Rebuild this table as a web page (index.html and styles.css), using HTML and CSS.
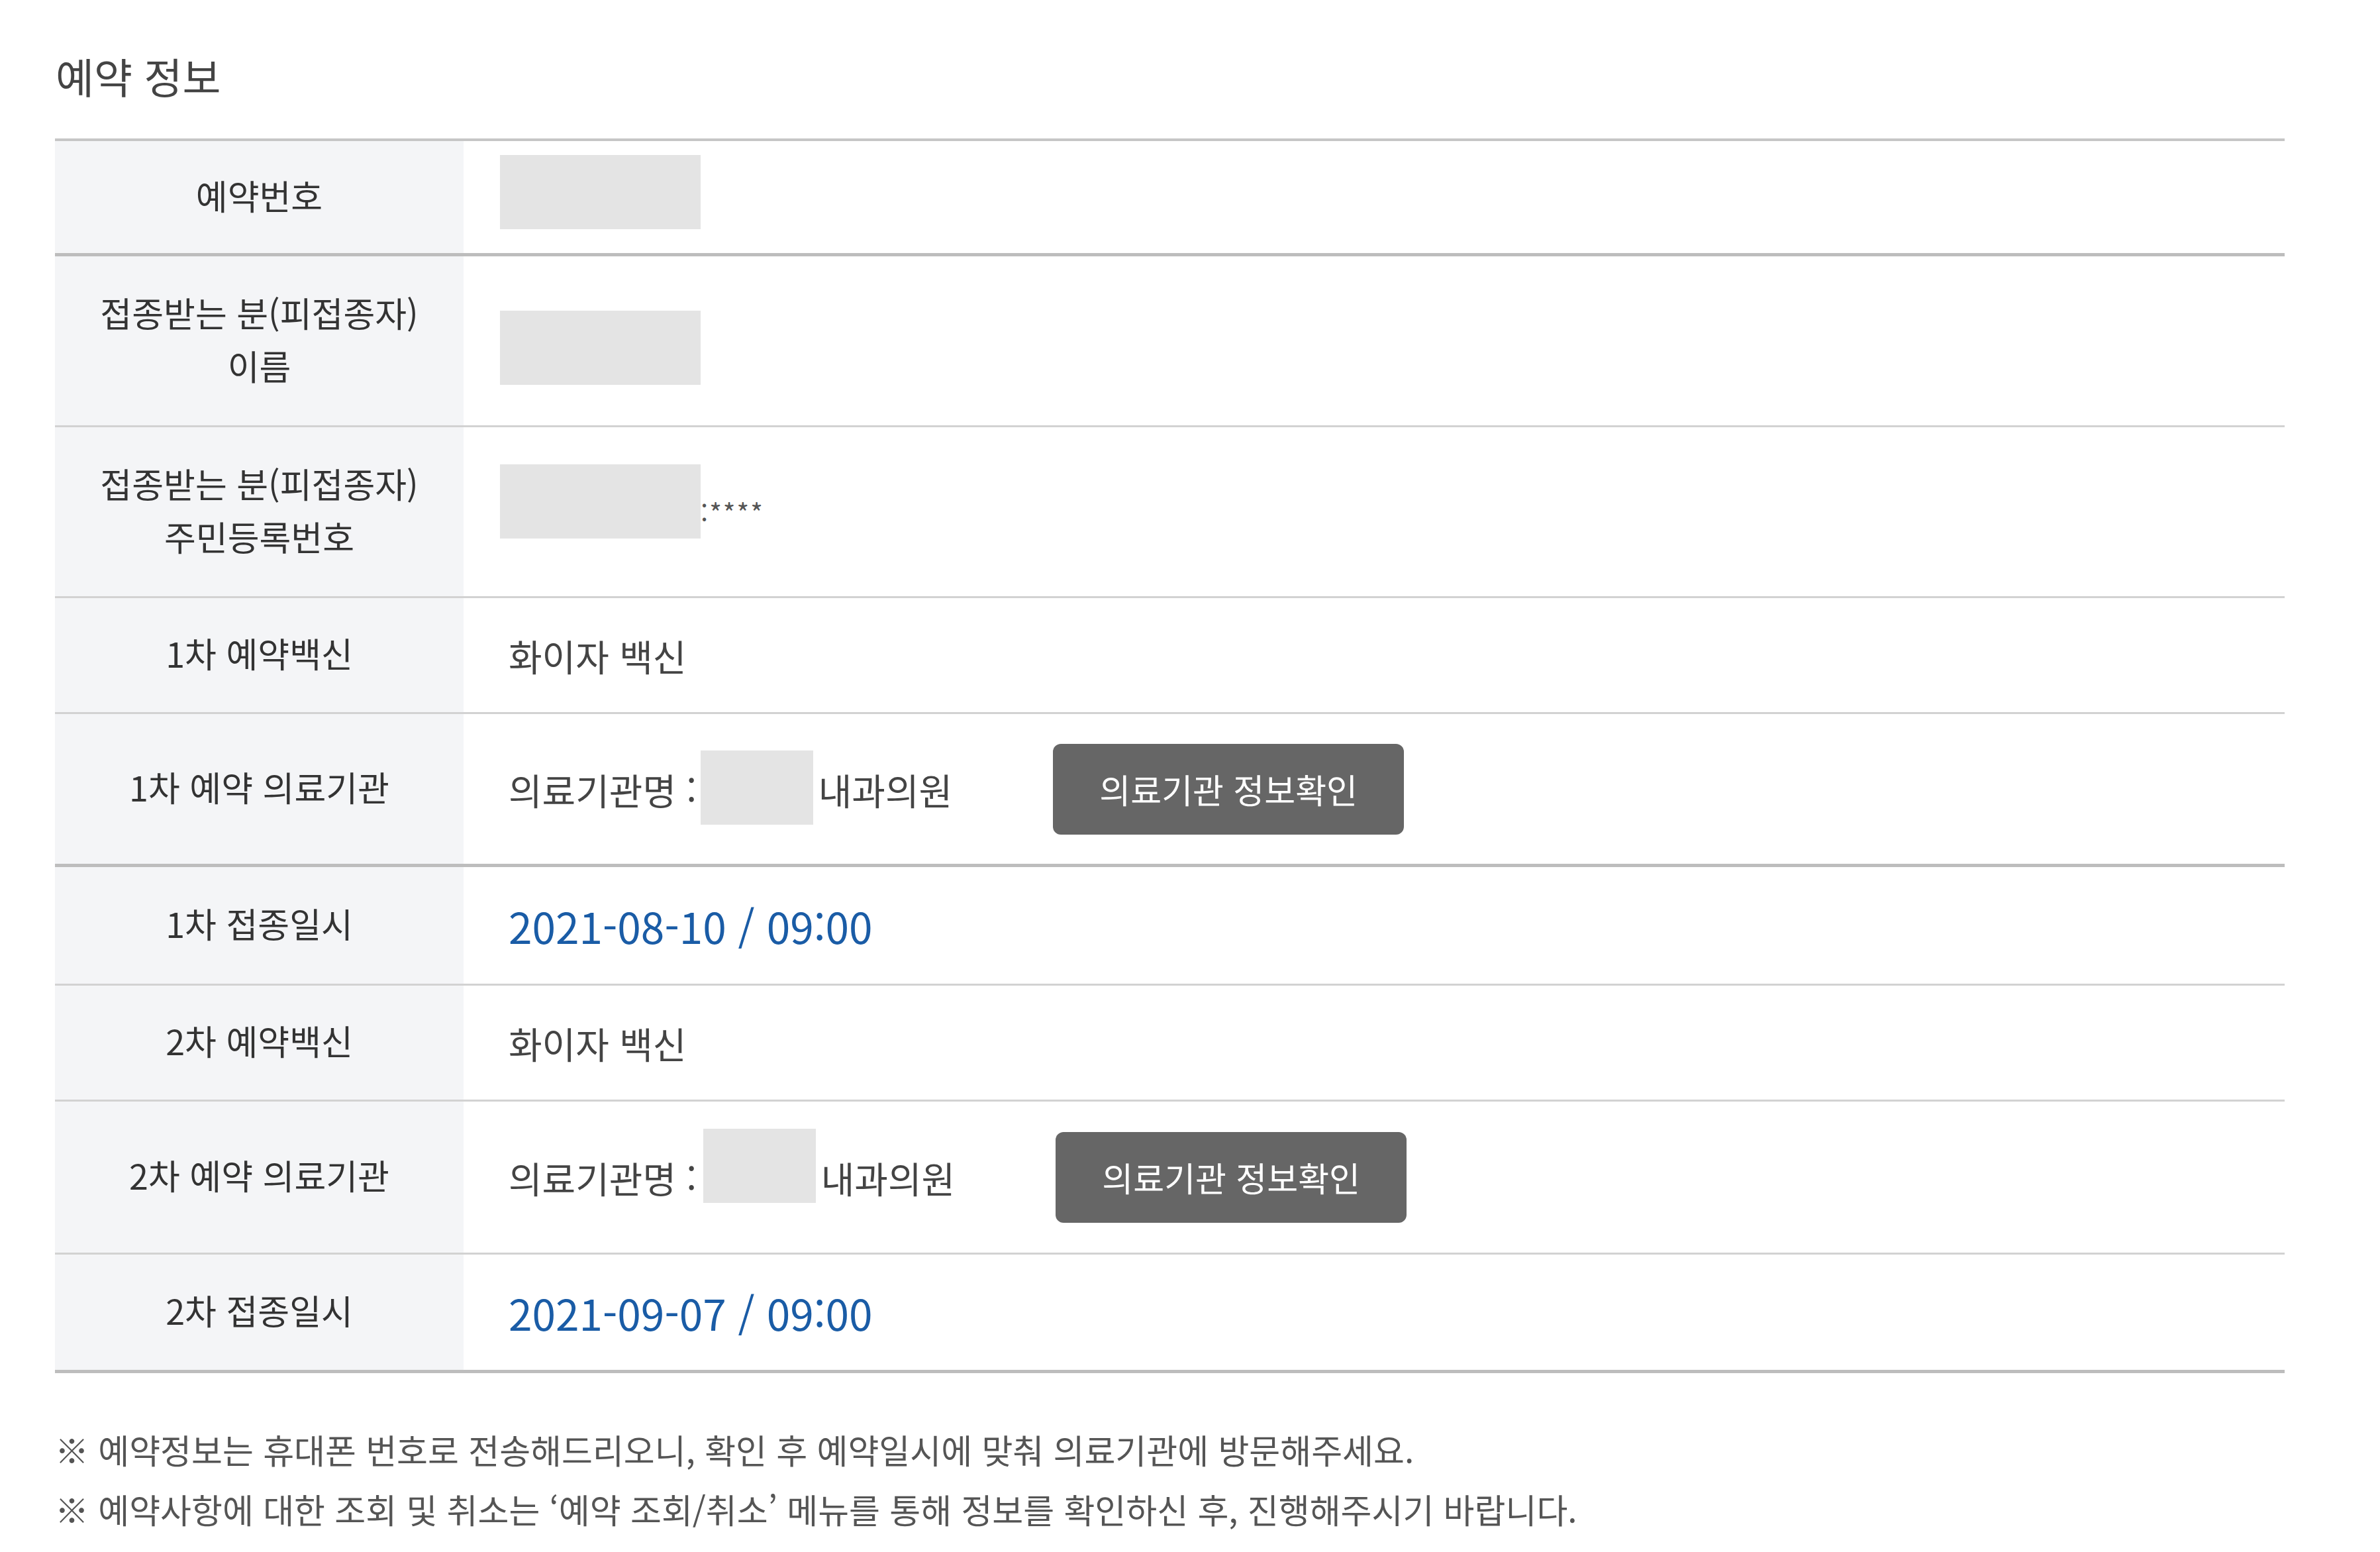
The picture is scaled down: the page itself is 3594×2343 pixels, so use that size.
FILE: index.html
```html
<!DOCTYPE html>
<html lang="ko">
<head>
<meta charset="utf-8">
<title>예약 정보</title>
<link rel="stylesheet" href="styles.css">
</head>
<body>
<div class="page">
  <h2 class="title">예약 정보</h2>
  <div class="info">
    <div class="row r-short thick">
      <div class="label">예약번호</div>
      <div class="value"><span class="mask mask-lg"></span></div>
    </div>
    <div class="row r-tall">
      <div class="label">접종받는 분(피접종자)<br>이름</div>
      <div class="value"><span class="mask mask-lg mask-low"></span></div>
    </div>
    <div class="row r-tall">
      <div class="label">접종받는 분(피접종자)<br>주민등록번호</div>
      <div class="value"><span class="mask mask-lg mask-high"></span><span class="stars">:****</span></div>
    </div>
    <div class="row r-short">
      <div class="label">1차 예약백신</div>
      <div class="value"><span class="text">화이자 백신</span></div>
    </div>
    <div class="row r-btn thick">
      <div class="label">1차 예약 의료기관</div>
      <div class="value">
        <span class="text">의료기관명 :</span><span class="mask mask-sm"></span><span class="text">내과의원</span>
        <button class="btn" type="button">의료기관 정보확인</button>
      </div>
    </div>
    <div class="row r-date">
      <div class="label">1차 접종일시</div>
      <div class="value"><span class="date">2021-08-10 / 09:00</span></div>
    </div>
    <div class="row r-short">
      <div class="label">2차 예약백신</div>
      <div class="value"><span class="text">화이자 백신</span></div>
    </div>
    <div class="row r-btn">
      <div class="label">2차 예약 의료기관</div>
      <div class="value">
        <span class="text">의료기관명 :</span><span class="mask mask-sm mask-high2"></span><span class="text">내과의원</span>
        <button class="btn" type="button">의료기관 정보확인</button>
      </div>
    </div>
    <div class="row r-date thick">
      <div class="label">2차 접종일시</div>
      <div class="value"><span class="date">2021-09-07 / 09:00</span></div>
    </div>
  </div>
  <ul class="notes">
    <li>※ 예약정보는 휴대폰 번호로 전송해드리오니, 확인 후 예약일시에 맞춰 의료기관에 방문해주세요.</li>
    <li>※ 예약사항에 대한 조회 및 취소는 ‘예약 조회/취소’ 메뉴를 통해 정보를 확인하신 후, 진행해주시기 바랍니다.</li>
  </ul>
</div>
</body>
</html>
```

FILE: styles.css
```css
* {
  box-sizing: border-box;
}

html, body {
  margin: 0;
  padding: 0;
  background: #ffffff;
}

body {
  font-family: "Noto Sans CJK KR", "Noto Sans", sans-serif;
  color: #333333;
}

.page {
  padding: 74px 144px 40px 83px;
  width: 3594px;
}

.title {
  margin: 0 0 55px 0;
  height: 80px;
  line-height: 80px;
  font-size: 63px;
  font-weight: 400;
  color: #444444;
  padding-left: 1px;
}

.info {
  border-top: 4px solid #c6c6c6;
  width: 3367px;
}

.row {
  display: flex;
  border-bottom: 3px solid #d2d2d2;
}

.row.thick {
  border-bottom: 5px solid #bdbdbd;
}

.r-short { height: 175px; }
.r-tall { height: 258px; }
.r-btn { height: 231px; }
.r-date { height: 179px; }

.row:first-child { height: 174px; }

.label {
  width: 617px;
  flex: none;
  background: #f4f5f7;
  display: flex;
  align-items: center;
  justify-content: center;
  text-align: center;
  font-size: 52px;
  line-height: 80px;
  color: #333333;
  padding-bottom: 6px;
}

.value {
  flex: 1;
  display: flex;
  align-items: center;
  padding-left: 68px;
  font-size: 55px;
  color: #444444;
}

.mask {
  display: inline-block;
  background: #e4e4e4;
  height: 112px;
}

.mask-lg {
  width: 303px;
  margin-left: -13px;
  margin-top: -16px;
}

.mask-low {
  margin-top: 20px;
}

.mask-high {
  margin-top: -32px;
}

.mask-sm {
  width: 170px;
  margin: -4px 8px 0 6px;
}

.mask-high2 {
  margin-top: -34px;
  margin-left: 10px;
}

.stars {
  font-size: 40px;
  color: #555555;
  letter-spacing: 2px;
}

.text {
  line-height: 1;
}

.btn {
  margin-left: 152px;
  width: 530px;
  height: 137px;
  border: none;
  border-radius: 12px;
  background: #666666;
  color: #ffffff;
  font-family: "Noto Sans CJK KR", "Noto Sans", sans-serif;
  font-size: 51px;
  padding: 0;
}

.date {
  font-size: 64px;
  color: #1a5ca6;
  line-height: 1;
}

.notes {
  list-style: none;
  margin: 70px 0 0 0;
  padding: 0;
  font-size: 51px;
  line-height: 90px;
  color: #555555;
}

.notes li {
  margin: 0;
  white-space: nowrap;
}
```
